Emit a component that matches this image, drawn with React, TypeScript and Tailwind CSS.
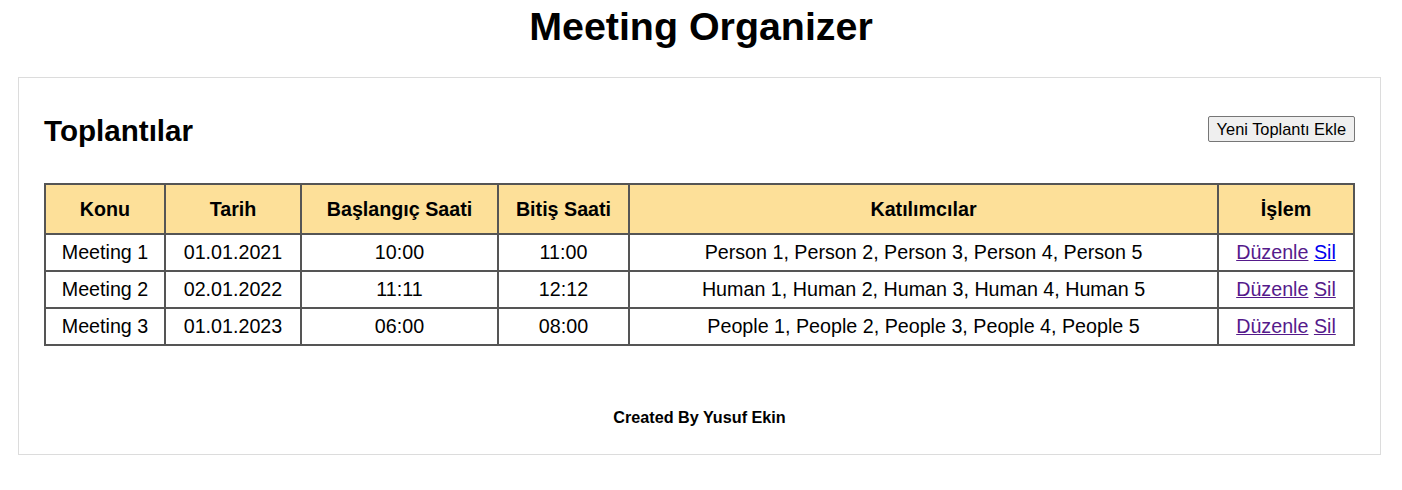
const meetings = [
  {
    konu: "Meeting 1",
    tarih: "01.01.2021",
    baslangic: "10:00",
    bitis: "11:00",
    katilimcilar: "Person 1, Person 2, Person 3, Person 4, Person 5",
    duzenleVisited: true,
    silVisited: false,
  },
  {
    konu: "Meeting 2",
    tarih: "02.01.2022",
    baslangic: "11:11",
    bitis: "12:12",
    katilimcilar: "Human 1, Human 2, Human 3, Human 4, Human 5",
    duzenleVisited: true,
    silVisited: true,
  },
  {
    konu: "Meeting 3",
    tarih: "01.01.2023",
    baslangic: "06:00",
    bitis: "08:00",
    katilimcilar: "People 1, People 2, People 3, People 4, People 5",
    duzenleVisited: true,
    silVisited: true,
  },
];

const columns = [
  { label: "Konu", width: "w-[122px]" },
  { label: "Tarih", width: "w-[136px]" },
  { label: "Başlangıç Saati", width: "w-[197px]" },
  { label: "Bitiş Saati", width: "w-[131px]" },
  { label: "Katılımcılar", width: "w-[589px]" },
  { label: "İşlem", width: "w-[136px]" },
];

function Cell({ first, children }: { first?: boolean; children: React.ReactNode }) {
  return (
    <td
      className={
        "border-r-2 border-b-2 border-[#555] px-2 py-[6px] text-center leading-[23px] " +
        (first ? "border-l-2" : "")
      }
    >
      {children}
    </td>
  );
}

export default function App() {
  return (
    <div className="min-h-[490px] bg-white font-['Liberation_Sans',Arial,sans-serif] text-black">
      <h1 className="pt-[4px] text-center text-[39.4px] font-bold leading-[45px]">Meeting Organizer</h1>

      <div className="ml-[18px] mt-[28px] w-[1363px] border border-[#dcdcdc] px-[25px] pb-[27px] pt-[36px]">
        <div className="flex items-start justify-between">
          <h2 className="text-[29.6px] font-bold leading-[34px]">Toplantılar</h2>
          <button className="mt-[2px] h-[26px] rounded-[2px] border border-[#767676] bg-[#efefef] px-[8px] text-[16.4px] leading-[19px] text-black">
            Yeni Toplantı Ekle
          </button>
        </div>

        <table className="mt-[35px] w-[1311px] table-fixed border-separate border-spacing-0 text-[19.7px]">
          <thead>
            <tr className="bg-[#fde099]">
              {columns.map((col, i) => (
                <th
                  key={col.label}
                  className={
                    col.width +
                    " border-t-2 border-r-2 border-b-2 border-[#555] px-2 py-[12px] text-center font-bold leading-[24px] " +
                    (i === 0 ? "border-l-2" : "")
                  }
                >
                  {col.label}
                </th>
              ))}
            </tr>
          </thead>
          <tbody>
            {meetings.map((m) => (
              <tr key={m.konu}>
                <Cell first>{m.konu}</Cell>
                <Cell>{m.tarih}</Cell>
                <Cell>{m.baslangic}</Cell>
                <Cell>{m.bitis}</Cell>
                <Cell>{m.katilimcilar}</Cell>
                <Cell>
                  <a href="#" className={"underline " + (m.duzenleVisited ? "text-[#551a8b]" : "text-[#0000ee]")}>
                    Düzenle
                  </a>{" "}
                  <a href="#" className={"underline " + (m.silVisited ? "text-[#551a8b]" : "text-[#0000ee]")}>
                    Sil
                  </a>
                </Cell>
              </tr>
            ))}
          </tbody>
        </table>

        <p className="mt-[62px] text-center text-[16.2px] font-bold leading-[19px]">Created By Yusuf Ekin</p>
      </div>
    </div>
  );
}
